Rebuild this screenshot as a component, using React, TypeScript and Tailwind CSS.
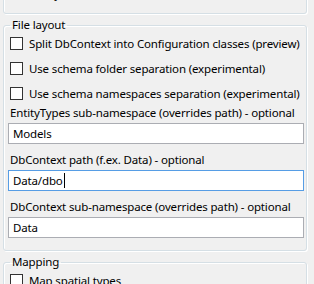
import type { ReactNode } from 'react';

const font = { fontFamily: '"Noto Sans", "Liberation Sans", sans-serif' };

function CheckRow({ label }: { label: string }) {
  return (
    <div className="flex h-[21px] items-center pl-[6px]">
      <span className="h-[13px] w-[13px] shrink-0 border border-[#333333] bg-white" />
      <span className="ml-[6px] whitespace-nowrap text-[11.5px] leading-[16px] tracking-[-0.15px] text-black">
        {label}
      </span>
    </div>
  );
}

function Group({ title, children, className = '' }: { title: string; children: ReactNode; className?: string }) {
  return (
    <fieldset
      className={`ml-[3px] mr-[7px] rounded-[3px] border border-[#d5dfe5] shadow-[1px_1px_0_#ffffff,inset_1px_1px_0_#ffffff] ${className}`}
    >
      <legend className="ml-[6px] px-[2px] text-[11.5px] leading-[16px] tracking-[-0.15px] text-black">{title}</legend>
      {children}
    </fieldset>
  );
}

function TextField({ label, value, focused }: { label: string; value: string; focused?: boolean }) {
  return (
    <div className="pl-[4px]">
      <div className="h-[16px] whitespace-nowrap pl-[2px] text-[11.5px] leading-[16px] tracking-[-0.15px] text-black">
        {label}
      </div>
      <div
        className={`mt-[2px] flex h-[21px] w-[296px] items-center border bg-white pl-[4px] text-[11.5px] tracking-[-0.15px] text-black ${
          focused ? 'border-[#569de5]' : 'border-[#abadb3]'
        }`}
      >
        <span>{value}</span>
        {focused && <span className="ml-[1px] h-[15px] w-px bg-black" />}
      </div>
    </div>
  );
}

export default function App() {
  return (
    <div className="h-[284px] w-[314px] overflow-hidden bg-[#f0f0f0]" style={font}>
      {/* previous group, mostly scrolled away */}
      <div className="ml-[3px] mr-[7px] -mt-[20px] h-[34px] rounded-[3px] border border-[#d5dfe5] pt-[2px] shadow-[1px_1px_0_#ffffff,inset_1px_1px_0_#ffffff]">
        <CheckRow label="Always include all schemas" />
      </div>

      <Group title="File layout" className="mt-[3px] pb-[12px]">
        <div className="flex flex-col gap-[4px]">
          <CheckRow label="Split DbContext into Configuration classes (preview)" />
          <CheckRow label="Use schema folder separation (experimental)" />
          <CheckRow label="Use schema namespaces separation (experimental)" />
        </div>
        <div className="mt-[1px] flex flex-col gap-[8px]">
          <TextField label="EntityTypes sub-namespace (overrides path) - optional" value="Models" />
          <TextField label="DbContext path (f.ex. Data) - optional" value="Data/dbo" focused />
          <TextField label="DbContext sub-namespace (overrides path) - optional" value="Data" />
        </div>
      </Group>

      <Group title="Mapping" className="mt-[3px] pb-[8px]">
        <CheckRow label="Map spatial types" />
        <CheckRow label="Map HierarchyId type" />
      </Group>
    </div>
  );
}
